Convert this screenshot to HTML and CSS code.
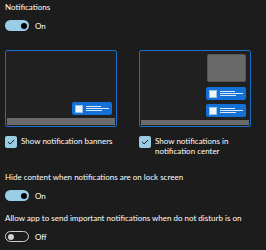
FILE: index.html
```html
<!DOCTYPE html>
<html lang="en">
<head>
  <meta charset="UTF-8">
  <meta name="viewport" content="width=device-width, initial-scale=1.0">
  <title>Notifications</title>
  <link rel="stylesheet" href="styles.css">
</head>
<body>
  <div class="settings">
    <div class="label">Notifications</div>
    <div class="toggle-row">
      <span class="toggle on"><span class="knob"></span></span>
      <span class="state">On</span>
    </div>

    <div class="previews">
      <div class="option">
        <div class="preview">
          <div class="screen">
            <div class="banner">
              <span class="icon"></span>
              <span class="lines"><i class="l1"></i><i class="l2"></i><i class="l3"></i></span>
            </div>
          </div>
          <div class="taskbar"></div>
        </div>
        <label class="check">
          <span class="box">
            <svg viewBox="0 0 12 12" width="12" height="12"><path d="M3.3 6.2 L5.2 8 L8.8 4.2" fill="none" stroke="#1c1c1c" stroke-width="1" stroke-linecap="round" stroke-linejoin="round"/></svg>
          </span>
          <span>Show notification banners</span>
        </label>
      </div>

      <div class="option">
        <div class="preview">
          <div class="screen">
            <div class="center-panel"></div>
            <div class="banner">
              <span class="icon"></span>
              <span class="lines"><i class="l1"></i><i class="l2"></i><i class="l3"></i></span>
            </div>
            <div class="banner">
              <span class="icon"></span>
              <span class="lines"><i class="l1"></i><i class="l2"></i><i class="l3"></i></span>
            </div>
          </div>
          <div class="taskbar"></div>
        </div>
        <label class="check">
          <span class="box">
            <svg viewBox="0 0 12 12" width="12" height="12"><path d="M3.3 6.2 L5.2 8 L8.8 4.2" fill="none" stroke="#1c1c1c" stroke-width="1" stroke-linecap="round" stroke-linejoin="round"/></svg>
          </span>
          <span>Show notifications in<br>notification center</span>
        </label>
      </div>
    </div>

    <div class="label hide-label">Hide content when notifications are on lock screen</div>
    <div class="toggle-row">
      <span class="toggle on"><span class="knob"></span></span>
      <span class="state">On</span>
    </div>

    <div class="label dnd-label">Allow app to send important notifications when do not disturb is on</div>
    <div class="toggle-row">
      <span class="toggle off"><span class="knob"></span></span>
      <span class="state">Off</span>
    </div>
  </div>
</body>
</html>
```

FILE: styles.css
```css
body {
  margin: 0;
  background-color: #1c1c1c;
  color: #ffffff;
  font-family: Lato, "Liberation Sans", sans-serif;
  font-size: 8px;
}

.settings {
  padding: 2px 5px 0;
}

.label {
  line-height: 10px;
  white-space: nowrap;
}

.toggle-row {
  display: flex;
  align-items: center;
  gap: 6px;
  margin-top: 8px;
}

.toggle {
  width: 24px;
  height: 11px;
  box-sizing: border-box;
  border-radius: 6px;
  display: flex;
  align-items: center;
  padding: 0 2px;
}

.toggle.on {
  background-color: #99cde6;
  justify-content: flex-end;
}

.toggle.off {
  border: 1px solid #cfcfcf;
  justify-content: flex-start;
}

.toggle .knob {
  width: 6px;
  height: 6px;
  border-radius: 50%;
}

.toggle.on .knob {
  background-color: #000000;
}

.toggle.off .knob {
  background-color: #d0d0d0;
}

.state {
  line-height: 10px;
}

.previews {
  display: grid;
  grid-template-columns: 134px 112px;
  margin-top: 19px;
}

.preview {
  width: 112px;
  height: 77px;
  box-sizing: border-box;
  border: 1px solid #1a6fc9;
  border-radius: 2px;
  background-color: #202020;
  padding: 1px;
  display: flex;
  flex-direction: column;
}

.screen {
  flex: 1;
  display: flex;
  flex-direction: column;
  align-items: flex-end;
  justify-content: flex-end;
  gap: 4px;
  padding: 2px 3px 3px 0;
}

.center-panel {
  width: 39px;
  height: 28px;
  background-color: #696969;
  border: 1px solid #555555;
  box-sizing: border-box;
  border-radius: 2px;
  margin-bottom: 1px;
}

.banner {
  width: 40px;
  height: 13px;
  background-color: #1270d6;
  border-radius: 2px;
  display: flex;
  align-items: center;
  gap: 3px;
  padding-left: 3px;
  box-sizing: border-box;
}

.icon {
  width: 6px;
  height: 6px;
  background-color: #eef4fb;
  border: 1px solid #9cc3ee;
}

.lines {
  display: flex;
  flex-direction: column;
  gap: 1px;
}

.lines i {
  display: block;
  height: 1px;
  background-color: #dbe9f8;
}

.lines .l1 {
  width: 15px;
}

.lines .l2 {
  width: 23px;
}

.lines .l3 {
  width: 16px;
}

.taskbar {
  height: 7px;
  background-color: #6b6b6b;
}

.check {
  display: flex;
  align-items: flex-start;
  gap: 4px;
  margin-top: 9px;
  line-height: 10px;
  white-space: nowrap;
}

.box {
  width: 12px;
  height: 12px;
  flex-shrink: 0;
  background-color: #99cde6;
  border-radius: 2px;
}

.box svg {
  display: block;
}

.hide-label {
  margin-top: 16px;
}

.dnd-label {
  margin-top: 12px;
}
```
